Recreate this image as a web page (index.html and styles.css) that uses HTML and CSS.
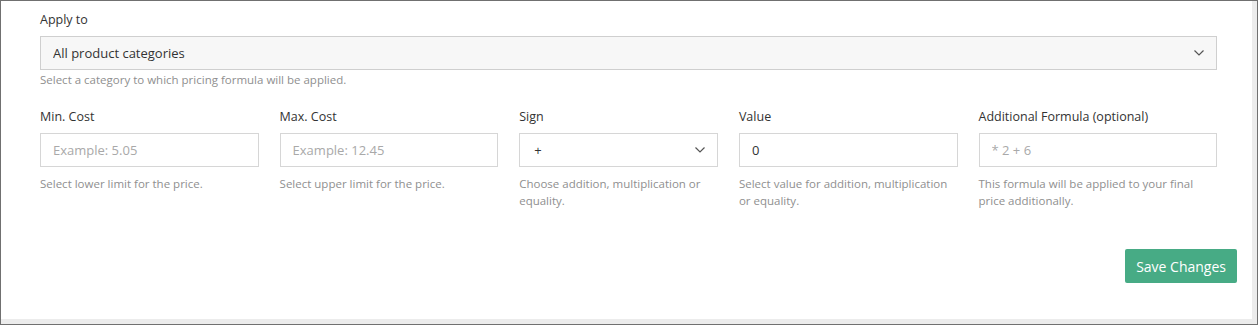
FILE: index.html
```html
<!DOCTYPE html>
<html lang="en">
<head>
  <meta charset="UTF-8" />
  <meta name="viewport" content="width=device-width, initial-scale=1" />
  <title>Pricing Formula</title>
  <link rel="stylesheet" href="styles.css">
</head>
<body>

  <div class="window">
    <div class="card">

      <!-- ====== Apply to ====== -->
      <div class="form-area">
        <div class="field">
          <label class="field-label" for="category">Apply to</label>
          <div class="select-wrap">
            <select class="control control-select" id="category">
              <option>All product categories</option>
            </select>
            <svg class="chevron" width="10" height="6" viewBox="0 0 10 6"><path d="M0.5 0.5 L5 5 L9.5 0.5" fill="none" stroke="#555" stroke-width="1.2"/></svg>
          </div>
          <p class="help help-tight">Select a category to which pricing formula will be applied.</p>
        </div>

        <!-- ====== Range + formula ====== -->
        <div class="formula-row">
          <div class="field">
            <label class="field-label" for="minCost">Min. Cost</label>
            <input class="control" id="minCost" type="text" placeholder="Example: 5.05">
            <p class="help">Select lower limit for the price.</p>
          </div>
          <div class="field">
            <label class="field-label" for="maxCost">Max. Cost</label>
            <input class="control" id="maxCost" type="text" placeholder="Example: 12.45">
            <p class="help">Select upper limit for the price.</p>
          </div>
          <div class="field">
            <label class="field-label" for="sign">Sign</label>
            <div class="select-wrap">
              <select class="control control-select control-white" id="sign">
                <option>+</option>
                <option>*</option>
                <option>=</option>
              </select>
              <svg class="chevron" width="10" height="6" viewBox="0 0 10 6"><path d="M0.5 0.5 L5 5 L9.5 0.5" fill="none" stroke="#555" stroke-width="1.2"/></svg>
            </div>
            <p class="help">Choose addition, multiplication or equality.</p>
          </div>
          <div class="field">
            <label class="field-label" for="value">Value</label>
            <input class="control" id="value" type="text" value="0">
            <p class="help">Select value for addition, multiplication or equality.</p>
          </div>
          <div class="field">
            <label class="field-label" for="extra">Additional Formula (optional)</label>
            <input class="control" id="extra" type="text" placeholder="* 2 + 6">
            <p class="help">This formula will be applied to your final price additionally.</p>
          </div>
        </div>
      </div>

      <!-- ====== Footer ====== -->
      <div class="card-footer">
        <button class="btn-save" type="button">Save Changes</button>
      </div>

    </div>
  </div>

</body>
</html>
```

FILE: styles.css
```css
*{margin:0;padding:0;box-sizing:border-box}

body{
  font-family:"Open Sans","Noto Sans",sans-serif;
  font-size:13px;
  color:#333;
  background:#fff
}

.window{
  height:325px;
  border:1px solid #707070;
  background:#ececec;
  padding:0 5px 5px 0
}

.card{
  height:100%;
  background:#fff;
  padding:10px 15px 0 39px
}

.form-area{padding-right:20px}

/* === Campos === */
.field-label{
  display:block;
  font-size:12.5px;
  line-height:18px;
  margin-bottom:7px;
  color:#333
}

.control{
  display:block;width:100%;height:34px;
  border:1px solid #d6d6d6;border-radius:0;
  background:#fff;
  padding:0 12px;
  font-family:inherit;font-size:13px;color:#333;
  outline:none
}
.control::placeholder{color:#a9a9a9}

.select-wrap{position:relative}
.control-select{
  appearance:none;-webkit-appearance:none;
  background:#f7f7f7;
  border-color:#cfcfcf
}
.control-white{background:#fff;border-color:#d6d6d6;padding-left:14px}
.chevron{position:absolute;right:13px;top:14px;pointer-events:none}

.help{
  font-size:11.5px;line-height:17px;
  color:#8f8f8f;
  margin-top:8px
}
.help-tight{margin-top:1px}

/* === Fila de formula === */
.formula-row{
  display:grid;
  grid-template-columns:11fr 11fr 10fr 11fr 12fr;
  column-gap:21px;
  margin-top:20px
}

/* === Footer === */
.card-footer{
  display:flex;justify-content:flex-end;
  margin-top:40px
}
.btn-save{
  height:34px;padding:0 11px;
  background:#47ab85;color:#fff;
  border:none;border-radius:2px;
  font-family:inherit;font-size:14px;
  cursor:pointer
}
.btn-save:hover{background:#3d9874}
```
